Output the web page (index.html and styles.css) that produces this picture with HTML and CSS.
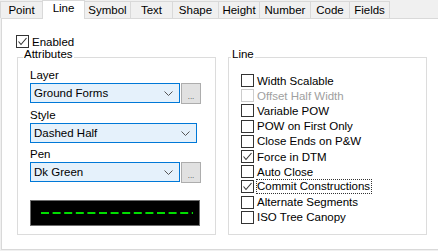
FILE: index.html
```html
<!DOCTYPE html>
<html lang="en">
<head>
    <meta charset="UTF-8">
    <title>Line Properties</title>
    <link rel="stylesheet" href="styles.css">
</head>
<body>
    <!-- Tab strip -->
    <nav class="tabs">
        <span class="tab tab-point">Point</span>
        <span class="tab tab-line active">Line</span>
        <span class="tab tab-symbol">Symbol</span>
        <span class="tab tab-text">Text</span>
        <span class="tab tab-shape">Shape</span>
        <span class="tab tab-height">Height</span>
        <span class="tab tab-number">Number</span>
        <span class="tab tab-code">Code</span>
        <span class="tab tab-fields">Fields</span>
    </nav>

    <div class="panel">
        <label class="check enabled">
            <span class="box"><svg width="11" height="11" viewBox="0 0 11 11"><polyline points="1.5,5.5 4,8.5 9.5,2" fill="none" stroke="#333" stroke-width="1.1"/></svg></span>
            Enabled
        </label>

        <div class="groups">
            <!-- Attributes group -->
            <div class="group attributes">
                <span class="group-title">Attributes</span>

                <div class="field first">
                    <div class="field-label">Layer</div>
                    <div class="field-row">
                        <div class="select short">Ground Forms<svg class="chevron" width="9" height="5" viewBox="0 0 9 5"><polyline points="0.5,0.5 4.5,4.5 8.5,0.5" fill="none" stroke="#555" stroke-width="1"/></svg></div>
                        <button class="more">...</button>
                    </div>
                </div>

                <div class="field">
                    <div class="field-label">Style</div>
                    <div class="field-row">
                        <div class="select wide">Dashed Half<svg class="chevron" width="9" height="5" viewBox="0 0 9 5"><polyline points="0.5,0.5 4.5,4.5 8.5,0.5" fill="none" stroke="#555" stroke-width="1"/></svg></div>
                    </div>
                </div>

                <div class="field">
                    <div class="field-label">Pen</div>
                    <div class="field-row">
                        <div class="select short">Dk Green<svg class="chevron" width="9" height="5" viewBox="0 0 9 5"><polyline points="0.5,0.5 4.5,4.5 8.5,0.5" fill="none" stroke="#555" stroke-width="1"/></svg></div>
                        <button class="more">...</button>
                    </div>
                </div>

                <!-- Line style preview -->
                <div class="preview">
                    <svg width="168" height="24" viewBox="0 0 168 24"><line x1="10" y1="12" x2="162" y2="12" stroke="#00dd00" stroke-width="2" stroke-dasharray="8 3.6"/></svg>
                </div>
            </div>

            <!-- Line options group -->
            <div class="group line">
                <span class="group-title">Line</span>
                <div class="check-list">
                    <label class="check"><span class="box"></span>Width Scalable</label>
                    <label class="check disabled"><span class="box"></span>Offset Half Width</label>
                    <label class="check"><span class="box"></span>Variable POW</label>
                    <label class="check"><span class="box"></span>POW on First Only</label>
                    <label class="check"><span class="box"></span>Close Ends on P&amp;W</label>
                    <label class="check"><span class="box"><svg width="11" height="11" viewBox="0 0 11 11"><polyline points="1.5,5.5 4,8.5 9.5,2" fill="none" stroke="#333" stroke-width="1.1"/></svg></span>Force in DTM</label>
                    <label class="check"><span class="box"></span>Auto Close</label>
                    <label class="check"><span class="box"><svg width="11" height="11" viewBox="0 0 11 11"><polyline points="1.5,5.5 4,8.5 9.5,2" fill="none" stroke="#333" stroke-width="1.1"/></svg></span><span class="focus">Commit Constructions</span></label>
                    <label class="check"><span class="box"></span>Alternate Segments</label>
                    <label class="check"><span class="box"></span>ISO Tree Canopy</label>
                </div>
            </div>
        </div>
    </div>
</body>
</html>
```

FILE: styles.css
```css
/* Basic dialog look */
body {
    font-family: "Liberation Sans", Arial, sans-serif;
    font-size: 11.5px;
    color: #000;
    background-color: #f0f0f0;
    margin: 0;
    padding: 0;
}

/* Tab strip */
.tabs {
    display: flex;
    align-items: flex-end;
    height: 18px;
}

.tab {
    box-sizing: border-box;
    height: 17px;
    line-height: 16px;
    text-align: center;
    background-color: #f0f0f0;
    border: 1px solid #d9d9d9;
    border-bottom: none;
    margin-right: -1px;
}

/* Tab widths as drawn by the dialog */
.tab-point  { width: 43px; }
.tab-line   { width: 43px; }
.tab-symbol { width: 47px; }
.tab-text   { width: 43px; }
.tab-shape  { width: 47px; }
.tab-height { width: 42px; }
.tab-number { width: 52px; }
.tab-code   { width: 40px; }
.tab-fields { width: 41px; }

.tab.active {
    height: 19px;
    line-height: 15px;
    background-color: #fff;
    position: relative;
    z-index: 1;
    margin-bottom: -1px;
}

/* Main white panel */
.panel {
    box-sizing: border-box;
    height: 232px;
    margin-left: 1px;
    background-color: #fff;
    border: 1px solid #d9d9d9;
    border-right: none;
    padding: 16px 0 0 14px;
}

/* Checkboxes */
.check {
    display: flex;
    align-items: center;
    height: 15.2px;
    white-space: nowrap;
}

.box {
    box-sizing: border-box;
    width: 13px;
    height: 13px;
    border: 1px solid #333;
    background-color: #fff;
    margin-right: 3px;
    display: flex;
    align-items: center;
    justify-content: center;
}

.check.enabled {
    height: 13px;
}

.check.disabled {
    color: #a0a0a0;
}

.check.disabled .box {
    border-color: #cccccc;
}

/* Dotted focus rectangle */
.focus {
    outline: 1px dotted #333;
    outline-offset: 0;
    padding: 0 1px 0 0;
    line-height: 13px;
}

/* Group boxes */
.groups {
    display: flex;
    gap: 12px;
    margin-top: 9px;
    margin-left: 1px;
}

.group {
    box-sizing: border-box;
    width: 199px;
    height: 178px;
    border: 1px solid #dcdcdc;
    padding: 0 0 0 12px;
}

.group-title {
    display: block;
    width: fit-content;
    margin-top: -10px;
    line-height: 13px;
    background-color: #fff;
    padding: 0 1px;
}

.attributes .group-title {
    margin-left: -7px;
}

.line .group-title {
    margin-left: -10px;
}

/* Fields in the attributes group */
.field {
    margin-top: 4px;
}

.field.first {
    margin-top: 7px;
}

.field-label {
    line-height: 15px;
}

.field-row {
    display: flex;
    gap: 1px;
}

.select {
    box-sizing: border-box;
    height: 20px;
    display: flex;
    align-items: center;
    justify-content: space-between;
    padding: 0 6px 0 3px;
    background-color: #e5f1fb;
    border: 1px solid #0078d7;
}

.select.short {
    width: 150px;
}

.select.wide {
    width: 167px;
}

.more {
    box-sizing: border-box;
    width: 20px;
    height: 21px;
    padding: 6px 0 0 0;
    background-color: #e1e1e1;
    border: 1px solid #adadad;
    font-family: "Liberation Sans", Arial, sans-serif;
    font-size: 8px;
    color: #444;
    line-height: 8px;
}

/* Black preview of the line style */
.preview {
    box-sizing: border-box;
    width: 170px;
    height: 26px;
    margin-top: 17px;
    background-color: #000;
    border: 1px solid #6d6d6d;
}

.preview svg {
    display: block;
}

/* Line options list */
.check-list {
    margin-top: 12px;
}
```
